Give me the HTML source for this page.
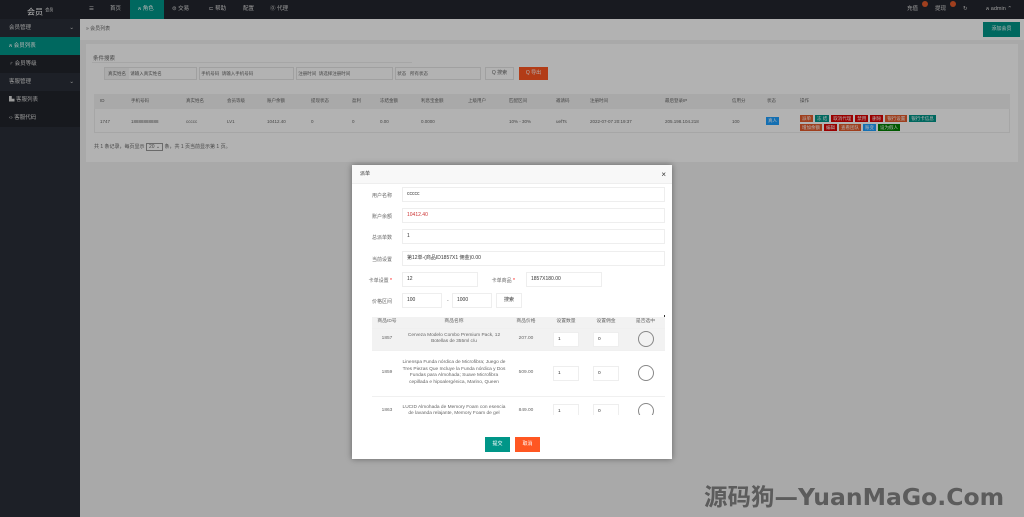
<!DOCTYPE html><html><head><meta charset="utf-8"><style>
*{box-sizing:border-box;margin:0;padding:0}
body{width:1024px;height:517px;overflow:hidden;position:relative;background:#f2f2f2;font-family:"Liberation Sans","Noto Sans CJK SC",sans-serif;font-size:5px;color:#666}
.a{position:absolute}
.top{left:0;top:0;width:1024px;height:19px;background:#23262e;color:#ddd}
.side{left:0;top:19px;width:80px;height:498px;background:#2a2f38;color:#ddd}
.side div{height:18px;line-height:18px;padding-left:9px;font-size:5.5px}
.nav span{position:absolute;top:0;line-height:19px;font-size:5.5px}
.card{background:#fff}
.btn{display:inline-block;color:#fff;padding:0 2px;height:7px;line-height:7px;font-size:4.5px;margin-right:2px}
.inp{border:1px solid #e6e6e6;background:#fff}
.ov{left:0;top:0;width:1024px;height:517px;background:rgba(0,0,0,.3)}
.m{left:352px;top:165px;width:320px;height:294px;background:#fff;box-shadow:0 0 6px rgba(0,0,0,.4)}
.lab{position:absolute;font-size:5px;color:#666;text-align:right;width:40px}
.fi{position:absolute;border:1px solid #eee;height:15px;line-height:13px;padding-left:4px;font-size:5px;color:#333}
.th td{height:11px}
td{font-size:4.8px;line-height:6.5px;text-align:center;color:#666;border-bottom:1px solid #f0f0f0}
.c{width:16px;height:16px;border:1px solid #888;border-radius:50%;margin:auto}
.sm{border:1px solid #eee;height:15px;line-height:13px;text-align:left;padding-left:4px;color:#333;width:26px;margin:auto;background:#fff}
</style></head><body>
<div class="a top nav">
<span style="left:27px;font-size:8px;color:#fff">会员 <sup style="font-size:4px">会员</sup></span>
<span style="left:89px">☰</span><span style="left:110px">首页</span>
<span style="left:130px;width:34px;height:19px;background:#009688;padding-left:8px;color:#fff">ጰ 角色</span>
<span style="left:172px">⊜ 交易</span><span style="left:209px">⊏ 帮助</span><span style="left:243px">配置</span><span style="left:270px">⓪ 代理</span>
<span style="left:907px">充值</span><span style="left:935px">提现</span><span style="left:963px">↻</span><span style="left:986px">ጰ admin ⌃</span>
<i class="a" style="left:922px;top:1px;width:6px;height:6px;border-radius:50%;background:#e45b2b"></i>
<i class="a" style="left:950px;top:1px;width:6px;height:6px;border-radius:50%;background:#e45b2b"></i>
</div>
<div class="a side">
<div>会员管理 <span style="float:right;margin-right:6px">⌄</span></div>
<div style="background:#009688;color:#fff">ጰ 会员列表</div>
<div style="background:#22252c">♂ 会员等级</div>
<div>客服管理 <span style="float:right;margin-right:6px">⌄</span></div>
<div style="background:#22252c">▙ 客服列表</div>
<div style="background:#22252c">‹› 客服代码</div>
</div>
<div class="a" style="left:80px;top:19px;width:944px;height:21px;background:#fff;line-height:21px;padding-left:6px;font-size:5px">» 会员列表</div>
<div class="a" style="left:983px;top:22px;width:37px;height:15px;background:#009688;color:#fff;font-size:5px;line-height:15px;text-align:center">添加会员</div>
<div class="a card" style="left:86px;top:44px;width:932px;height:118px">
<div class="a" style="left:7px;top:10px;font-size:5.5px">条件搜索</div>
<div class="a" style="left:6px;top:18px;width:320px;border-top:1px solid #eee"></div>
<div class="a inp" style="left:18px;top:23px;width:93px;height:13px;font-size:4.5px;line-height:11px"><span style="background:#f5f5f5;padding:0 3px;display:inline-block">真实姓名</span> 请输入真实姓名</div>
<div class="a inp" style="left:113px;top:23px;width:95px;height:13px;font-size:4.5px;line-height:11px">&nbsp;手机号码 &nbsp;请输入手机号码</div>
<div class="a inp" style="left:210px;top:23px;width:97px;height:13px;font-size:4.5px;line-height:11px">&nbsp;注册时间 &nbsp;请选择注册时间</div>
<div class="a inp" style="left:309px;top:23px;width:86px;height:13px;font-size:4.5px;line-height:11px">&nbsp;状态 &nbsp;&nbsp;所有状态</div>
<div class="a inp" style="left:399px;top:23px;width:29px;height:13px;font-size:5px;line-height:11px;text-align:center">Q 搜索</div>
<div class="a" style="left:433px;top:23px;width:29px;height:13px;background:#ff5722;color:#fff;font-size:5px;line-height:13px;text-align:center">Q 导出</div>
<div class="a" style="left:8px;top:50px;width:916px;height:15px;background:#f2f2f2"></div>
<div class="a" style="left:8px;top:65px;width:916px;height:24px;border:1px solid #eee;border-top:0"></div>
<div class="a" style="left:14px;top:54px;width:900px;font-size:4.5px;white-space:nowrap">
<span class="a" style="left:0">ID</span><span class="a" style="left:31px">手机号码</span><span class="a" style="left:86px">真实姓名</span><span class="a" style="left:127px">会员等级</span><span class="a" style="left:167px">账户余额</span><span class="a" style="left:211px">提现状态</span><span class="a" style="left:252px">盈利</span><span class="a" style="left:280px">冻结金额</span><span class="a" style="left:321px">利息宝金额</span><span class="a" style="left:368px">上级用户</span><span class="a" style="left:409px">匹配区间</span><span class="a" style="left:456px">邀请码</span><span class="a" style="left:490px">注册时间</span><span class="a" style="left:565px">最后登录IP</span><span class="a" style="left:632px">信用分</span><span class="a" style="left:667px">状态</span><span class="a" style="left:700px">操作</span></div>
<div class="a" style="left:14px;top:75px;width:900px;font-size:4.5px;white-space:nowrap">
<span class="a" style="left:0">1747</span><span class="a" style="left:31px">18888888888</span><span class="a" style="left:86px">ccccc</span><span class="a" style="left:127px">LV1</span><span class="a" style="left:167px">10412.40</span><span class="a" style="left:211px">0</span><span class="a" style="left:252px">0</span><span class="a" style="left:280px">0.00</span><span class="a" style="left:321px">0.0000</span><span class="a" style="left:409px">10% - 30%</span><span class="a" style="left:456px">uefTs</span><span class="a" style="left:490px">2022-07-07 20:19:37</span><span class="a" style="left:565px">205.198.104.218</span><span class="a" style="left:632px">100</span></div>
<div class="a" style="left:680px;top:73px;width:13px;height:8px;background:#1e9fff;color:#fff;font-size:4.5px;line-height:8px;text-align:center">真人</div>
<div class="a" style="left:714px;top:71px;width:200px;line-height:9px">
<span class="btn" style="background:#e45b2b">派单</span><span class="btn" style="background:#009688">冻 结</span><span class="btn" style="background:#d00">取消代理</span><span class="btn" style="background:#d00">禁用</span><span class="btn" style="background:#d00">删除</span><span class="btn" style="background:#e45b2b">银行设置</span><span class="btn" style="background:#009688">银行卡信息</span><br>
<span class="btn" style="background:#e45b2b">增加余额</span><span class="btn" style="background:#d00">编辑</span><span class="btn" style="background:#e45b2b">查看团队</span><span class="btn" style="background:#1e9fff">账变</span><span class="btn" style="background:#008000">设为假人</span></div>
</div>
<div class="a" style="left:94px;top:143px;font-size:5px">共 1 条记录，每页显示 <span style="border:1px solid #999;padding:0 2px">20 ⌄</span> 条，共 1 页当前显示第 1 页。</div>
<div class="a ov"></div>
<div class="a m">
<div style="height:19px;background:#f8f8f8;border-bottom:1px solid #eee;line-height:19px;padding-left:8px;font-size:5px;color:#333">派单<span style="float:right;margin-right:6px;font-size:8px">×</span></div>
<div class="lab" style="left:0;top:27px">用户名称</div><div class="fi" style="left:50px;top:22px;width:263px">ccccc</div>
<div class="lab" style="left:0;top:48px">账户余额</div><div class="fi" style="left:50px;top:43px;width:263px;color:#c33">10412.40</div>
<div class="lab" style="left:0;top:69px">总派单数</div><div class="fi" style="left:50px;top:64px;width:263px">1</div>
<div class="lab" style="left:0;top:91px">当前设置</div><div class="fi" style="left:50px;top:86px;width:263px">第12单-(商品ID1857X1 佣金)0.00</div>
<div class="lab" style="left:0;top:112px">卡单设置 <span style="color:red">*</span></div><div class="fi" style="left:50px;top:107px;width:76px">12</div>
<div class="lab" style="left:123px;top:112px">卡单商品 <span style="color:red">*</span></div><div class="fi" style="left:174px;top:107px;width:76px">1857X180.00</div>
<div class="lab" style="left:0;top:133px">价格区间</div><div class="fi" style="left:50px;top:128px;width:40px">100</div><span class="a" style="left:95px;top:133px">-</span><div class="fi" style="left:100px;top:128px;width:40px">1000</div><div class="fi" style="left:144px;top:128px;width:26px;text-align:center;padding:0">搜索</div>
<div class="a" style="left:312px;top:150px;width:1px;height:8px;background:#333"></div>
<div class="a" style="left:20px;top:152px;width:293px;height:98px;overflow:hidden">
<table style="width:293px;border-collapse:collapse;table-layout:fixed">
<col style="width:30px"><col style="width:104px"><col style="width:40px"><col style="width:40px"><col style="width:40px"><col style="width:39px">
<tr class="th" style="background:#f2f2f2"><td>商品ID号</td><td>商品名称</td><td>商品价格</td><td>设置数量</td><td>设置佣金</td><td>是否选中</td></tr>
<tr style="background:#f2f2f2;height:22px"><td>1857</td><td>Cerveza Modelo Combo Premium Pack, 12 Botellas de 355ml c/u</td><td>207.00</td><td><div class="sm">1</div></td><td><div class="sm">0</div></td><td><div class="c"></div></td></tr>
<tr style="height:46px"><td>1859</td><td>Linenspa Funda nórdica de Microfibra; Juego de Tres Piezas Que Incluye la Funda nórdica y Dos Fundas para Almohada; Suave Microfibra cepillada e hipoalergénica, Marino, Queen</td><td>509.00</td><td><div class="sm">1</div></td><td><div class="sm">0</div></td><td><div class="c"></div></td></tr>
<tr style="height:30px"><td>1863</td><td>LUCID Almohada de Memory Foam con esencia de lavanda relajante, Memory Foam de gel</td><td>849.00</td><td><div class="sm">1</div></td><td><div class="sm">0</div></td><td><div class="c"></div></td></tr>
</table></div>
<div class="a" style="left:133px;top:272px;width:25px;height:15px;background:#009688;color:#fff;font-size:5px;line-height:15px;text-align:center">提交</div>
<div class="a" style="left:163px;top:272px;width:25px;height:15px;background:#ff5722;color:#fff;font-size:5px;line-height:15px;text-align:center">取消</div>
</div>
<div class="a" style="left:704px;top:478px;font-size:23.5px;font-weight:bold;color:#5c5c5c;font-family:'DejaVu Sans','Noto Sans CJK SC',sans-serif;white-space:nowrap">源码狗—YuanMaGo.Com</div>
</body></html>
